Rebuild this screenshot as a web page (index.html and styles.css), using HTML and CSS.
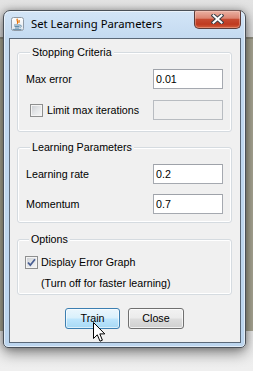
FILE: index.html
```html
<!DOCTYPE html>
<html>
<head>
<meta charset="utf-8">
<title>Set Learning Parameters</title>
<link rel="stylesheet" href="styles.css">
</head>
<body>
<div class="window">
  <div class="titlebar">
    <svg class="app-icon" width="13" height="14" viewBox="0 0 13 14">
      <defs>
        <linearGradient id="ig" x1="0" y1="0" x2="0" y2="1">
          <stop offset="0" stop-color="#ffffff"/>
          <stop offset="1" stop-color="#dfe6ee"/>
        </linearGradient>
      </defs>
      <rect x="0.5" y="0.5" width="12" height="13" rx="2" fill="url(#ig)" stroke="#8f9aa6"/>
      <path d="M6.5 1.8 C4.6 3.6 8.2 4.6 6.2 6.8 M8.3 3 C7.6 4 8.6 4.6 7.8 5.6" fill="none" stroke="#e76f00" stroke-width="1.2"/>
      <path d="M3 8 H9 M3.5 9.5 H8.5 M4 11 H8 M2 12.4 H10.5" stroke="#5382a1" stroke-width="0.9"/>
      <path d="M9 8.2 C11 8 11 10.2 8.6 10.4" fill="none" stroke="#5382a1" stroke-width="0.8"/>
    </svg>
    <span class="title">Set Learning Parameters</span>
    <div class="close-btn">
      <svg width="13" height="10" viewBox="0 0 13 10">
        <path d="M2.5 1.5 L10.5 8.5 M10.5 1.5 L2.5 8.5" stroke="#3b3f46" stroke-width="4" stroke-linecap="square"/>
        <path d="M2.5 1.5 L10.5 8.5 M10.5 1.5 L2.5 8.5" stroke="#ffffff" stroke-width="2" stroke-linecap="square"/>
      </svg>
    </div>
  </div>
  <div class="client">
    <fieldset class="group g-stop">
      <legend>Stopping Criteria</legend>
      <div class="row">
        <span class="label">Max error</span>
        <input class="field" type="text" value="0.01">
      </div>
      <div class="row row-gap11">
        <span class="check cb-limit"></span>
        <span class="label lbl-limit">Limit max iterations</span>
        <input class="field" type="text" value="" disabled>
      </div>
    </fieldset>

    <fieldset class="group g-learn">
      <legend>Learning Parameters</legend>
      <div class="row">
        <span class="label">Learning rate</span>
        <input class="field" type="text" value="0.2">
      </div>
      <div class="row row-gap10">
        <span class="label">Momentum</span>
        <input class="field" type="text" value="0.7">
      </div>
    </fieldset>

    <fieldset class="group g-opt">
      <legend>Options</legend>
      <div class="opt-row">
        <span class="check checked">
          <svg width="11" height="11" viewBox="0 0 11 11"><path d="M2 5.5 L4.3 8.2 L9 2.3" fill="none" stroke="#4a5f93" stroke-width="1.8"/></svg>
        </span>
        <span class="label">Display Error Graph</span>
      </div>
      <div class="opt-row opt-note">
        <span class="label">(Turn off for faster learning)</span>
      </div>
    </fieldset>

    <div class="buttons">
      <button class="btn btn-hot" type="button">Train</button>
      <button class="btn btn-close" type="button">Close</button>
    </div>

    <svg class="cursor" width="14" height="21" viewBox="0 0 14 21">
      <path d="M0.5 0.5 L0.5 16.5 L4.3 12.8 L7 19.2 L9.4 18.2 L6.8 11.9 L11.8 11.9 Z" fill="#ffffff" stroke="#000000" stroke-width="1" stroke-linejoin="miter"/>
    </svg>
  </div>
</div>
</body>
</html>
```

FILE: styles.css
```css
html, body {
  margin: 0;
  padding: 0;
}

body {
  width: 253px;
  height: 371px;
  overflow: hidden;
  background: linear-gradient(to bottom,
    #e3e3e3 0px, #dedede 37px,
    #8f8d7e 37px, #8f8d7e 39px,
    #a9a794 39px, #a9a794 331px,
    #ececec 331px, #efefef 371px);
  font-family: "Liberation Sans", Arial, sans-serif;
}

.window {
  box-sizing: border-box;
  width: 243px;
  height: 338px;
  margin: 10px 0 0 3px;
  border: 1px solid #4a5058;
  border-radius: 7px 7px 5px 5px;
  background: linear-gradient(to bottom, #d3e5f7 0px, #c2d9f0 30px, #bcd5ee 100%);
  box-shadow: inset 0 0 0 1px rgba(255,255,255,0.55), 0 5px 14px rgba(0,0,0,0.45), 0 0 6px rgba(0,0,0,0.25);
  padding: 0 4px 4px 5px;
  display: flex;
  flex-direction: column;
}

.titlebar {
  height: 27px;
  display: flex;
  align-items: center;
}

.app-icon {
  margin-left: 2px;
  margin-top: -1px;
  flex: none;
}

.title {
  margin-left: 7px;
  font-family: "Noto Sans", "Open Sans", sans-serif;
  font-size: 11.3px;
  color: #000;
  flex: 1;
  margin-top: -2px;
  white-space: nowrap;
}

.close-btn {
  align-self: flex-start;
  margin-top: -1px;
  width: 47px;
  height: 19px;
  box-sizing: border-box;
  border: 1px solid #5c3b38;
  border-top-color: #7a5a56;
  border-radius: 2px 2px 5px 5px;
  background: linear-gradient(to bottom, #eab1a3 0%, #dc8572 42%, #c64a31 50%, #bf3a20 78%, #d3603f 100%);
  box-shadow: inset 0 0 0 1px rgba(255,220,210,0.35);
  display: flex;
  align-items: center;
  justify-content: center;
  padding-bottom: 2px;
}

.client {
  position: relative;
  height: 305px;
  box-sizing: border-box;
  border: 1px solid #5a6878;
  background: #f0f0f0;
  display: flex;
  flex-direction: column;
}

.group {
  margin: 0 8px 0 7px;
  padding: 0;
  min-width: 0;
  width: 215px;
  box-sizing: border-box;
  border: 1px solid #d5dbe0;
  border-radius: 3px;
  box-shadow: inset 0 0 0 1px #ffffff;
}

.group legend {
  margin-left: 4px;
  padding: 0 2px;
  font-size: 10.7px;
  line-height: 13px;
  height: 13px;
  color: #000;
  background: #f0f0f0;
}

.g-stop {
  margin-top: 7px;
  padding: 10px 8px 11px 8px;
}

.g-learn {
  margin-top: 9px;
  padding: 10px 8px 8px 8px;
}

.g-opt {
  margin-top: 10px;
  padding: 7px 8px 2px 7px;
}

.row {
  height: 20px;
  display: flex;
  align-items: center;
}

.row-gap11 {
  margin-top: 11px;
}

.row-gap10 {
  margin-top: 10px;
}

.label {
  font-size: 10.7px;
  color: #000;
  white-space: nowrap;
}

.row .label {
  flex: 1;
}

.field {
  box-sizing: border-box;
  width: 70px;
  height: 20px;
  margin: 0;
  padding: 0 0 0 2px;
  border: 1px solid #a5a9b0;
  border-top-color: #9ea2a9;
  background: #ffffff;
  font-family: "Liberation Sans", Arial, sans-serif;
  font-size: 10.7px;
  color: #000;
  outline: none;
}

.field:disabled {
  background: #f0f0f0;
  border-color: #b8bcc1;
}

.check {
  box-sizing: border-box;
  width: 13px;
  height: 13px;
  flex: none;
  border: 1px solid #8e8f8f;
  background: linear-gradient(135deg, #c9ccd1 0%, #e4e6e8 50%, #f7f7f7 100%);
  box-shadow: inset 0 0 0 1px #f4f4f4;
  display: flex;
  align-items: center;
  justify-content: center;
}

.cb-limit {
  margin-left: 4px;
}

.lbl-limit {
  margin-left: 4px;
}

.checked svg {
  display: block;
}

.opt-row {
  height: 18px;
  display: flex;
  align-items: center;
}

.opt-row .check {
  margin-right: 3px;
}

.opt-note {
  margin-top: 3px;
  padding-left: 16px;
}

.buttons {
  margin-top: 13px;
  display: flex;
  justify-content: center;
  gap: 8px;
  padding-right: 1px;
}

.btn {
  box-sizing: border-box;
  height: 21px;
  margin: 0;
  padding: 0 0 1px 0;
  border-radius: 3px;
  font-family: "Liberation Sans", Arial, sans-serif;
  font-size: 10.7px;
  color: #000;
}

.btn-hot {
  width: 55px;
  border: 1px solid #3c7fb1;
  background: linear-gradient(to bottom, #eaf6fd 0%, #d9f0fc 48%, #bee6fd 52%, #a7d9f5 100%);
  box-shadow: inset 0 0 0 1px rgba(255,255,255,0.6);
}

.btn-close {
  width: 56px;
  border: 1px solid #707070;
  background: linear-gradient(to bottom, #f2f2f2 0%, #ebebeb 48%, #dddddd 52%, #cfcfcf 100%);
  box-shadow: inset 0 0 0 1px rgba(255,255,255,0.7);
}

.cursor {
  position: absolute;
  left: 83px;
  top: 283px;
}
```
